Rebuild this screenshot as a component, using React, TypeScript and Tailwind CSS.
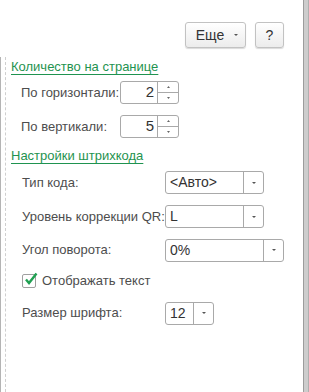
import React from 'react';

const font = { fontFamily: '"Liberation Sans", Arial, sans-serif' };

function Arrow() {
  return (
    <svg width="6" height="4" viewBox="0 0 6 4">
      <path d="M1 1h4L3 3z" fill="#555" />
    </svg>
  );
}

function Spin({ value }: { value: string }) {
  return (
    <div className="flex w-[59px] h-[23px] border border-[#a9a9a9] rounded-[3px] bg-white">
      <div className="flex-1 flex items-center justify-end pr-[3px] text-[15px] text-[#333]">{value}</div>
      <div className="w-[21px] flex flex-col border-l border-[#a9a9a9]">
        <div className="flex-1 flex items-center justify-center border-b border-[#a9a9a9]">
          <svg width="3" height="2" viewBox="0 0 3 2"><path d="M0 2h3L1.5 0z" fill="#666" /></svg>
        </div>
        <div className="flex-1 flex items-center justify-center">
          <svg width="3" height="2" viewBox="0 0 3 2"><path d="M0 0h3L1.5 2z" fill="#666" /></svg>
        </div>
      </div>
    </div>
  );
}

function Select({ value, width }: { value: string; width: string }) {
  return (
    <div className={`flex h-[23px] border border-[#a9a9a9] rounded-[3px] bg-white ${width}`}>
      <div className="flex-1 flex items-center pl-[4px] text-[14px] text-[#333]">{value}</div>
      <div className="w-[20px] flex items-center justify-center border-l border-[#a9a9a9]">
        <Arrow />
      </div>
    </div>
  );
}

export default function App() {
  return (
    <div className="w-[309px] h-[392px] flex bg-white text-[13px] text-[#4d4d4d] overflow-hidden" style={font}>
      <div className="flex-1 flex flex-col">
        {/* toolbar */}
        <div className="h-[57px] flex justify-end items-start gap-[9px] pt-[22px] pr-[19px]">
          <button className="h-[26px] w-[61px] flex items-center justify-center gap-[9px] pl-[4px] rounded-[3px] border border-[#c2c2c2] bg-gradient-to-b from-white to-[#ececec] shadow-[0_1px_1px_rgba(0,0,0,0.15)] text-[14px] text-[#333]">
            <span>Еще</span>
            <Arrow />
          </button>
          <button className="h-[26px] w-[29px] flex items-center justify-center rounded-[3px] border border-[#c2c2c2] bg-gradient-to-b from-white to-[#ececec] shadow-[0_1px_1px_rgba(0,0,0,0.15)] text-[14px] text-[#333]">
            ?
          </button>
        </div>

        <div className="flex-1 flex">
          <div className="w-px bg-[#b4b4b4]" />
          <div className="ml-[4px] border-l border-dashed border-[#cfcfcf]" />
          <div className="flex-1 flex flex-col pl-[5px]">
            <div className="mt-[2px] h-[16px] leading-[16px] text-[#1f9350] underline underline-offset-[3px] decoration-[#1f9350]">
              Количество на странице
            </div>
            <div className="mt-[6px] h-[23px] flex items-center pl-[10px]">
              <span className="w-[99px]">По горизонтали:</span>
              <Spin value="2" />
            </div>
            <div className="mt-[11px] h-[23px] flex items-center pl-[10px]">
              <span className="w-[99px]">По вертикали:</span>
              <Spin value="5" />
            </div>

            <div className="mt-[10px] h-[16px] leading-[16px] text-[#1f9350] underline underline-offset-[3px] decoration-[#1f9350]">
              Настройки штрихкода
            </div>
            <div className="mt-[7px] h-[23px] flex items-center pl-[11px]">
              <span className="w-[143px]">Тип кода:</span>
              <Select value="<Авто>" width="w-[99px]" />
            </div>
            <div className="mt-[11px] h-[23px] flex items-center pl-[11px]">
              <span className="w-[143px]">Уровень коррекции QR:</span>
              <Select value="L" width="w-[99px]" />
            </div>
            <div className="mt-[10px] h-[24px] flex items-center pl-[11px]">
              <span className="w-[143px]">Угол поворота:</span>
              <Select value="0%" width="w-[119px]" />
            </div>
            <div className="mt-[11px] h-[16px] flex items-center pl-[11px] gap-[6px]">
              <div className="relative w-[14px] h-[14px] border border-[#a0a0a0] rounded-[2px] bg-white">
                <svg className="absolute -top-[3px] left-[1px]" width="14" height="14" viewBox="0 0 14 14">
                  <path d="M2 7.5l3 3.5L12.5 1.5" fill="none" stroke="#20a052" strokeWidth="2.4" />
                </svg>
              </div>
              <span>Отображать текст</span>
            </div>
            <div className="mt-[13px] h-[22px] flex items-center pl-[11px]">
              <span className="w-[143px]">Размер шрифта:</span>
              <Select value="12" width="w-[49px]" />
            </div>
          </div>
        </div>
      </div>
      <div className="w-[6px] border-l border-[#9c9c9c] bg-[#cdcdcd] border-r border-r-[#b0b0b0]" />
    </div>
  );
}
